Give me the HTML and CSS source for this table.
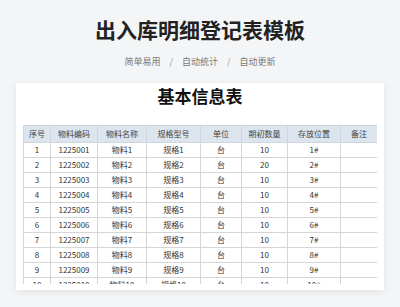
FILE: index.html
```html
<!DOCTYPE html>
<html lang="zh-CN">
<head>
<meta charset="utf-8">
<title>出入库明细登记表模板</title>
<link rel="stylesheet" href="styles.css">
</head>
<body>
<header class="hero">
  <h1 class="hero-title">出入库明细登记表模板</h1>
  <p class="hero-tags">
    <span>简单易用</span><span class="sep">/</span><span>自动统计</span><span class="sep">/</span><span>自动更新</span>
  </p>
</header>
<main class="card">
  <h2 class="card-title">基本信息表</h2>
  <div class="table-wrap">
    <table class="sheet">
      <colgroup>
        <col class="c1"><col class="c2"><col class="c3"><col class="c4"><col class="c5"><col class="c6"><col class="c7"><col class="c8">
      </colgroup>
      <thead>
        <tr><th>序号</th><th>物料编码</th><th>物料名称</th><th>规格型号</th><th>单位</th><th>期初数量</th><th>存放位置</th><th>备注</th></tr>
      </thead>
      <tbody>
        <tr><td>1</td><td>1225001</td><td>物料1</td><td>规格1</td><td>台</td><td>10</td><td>1#</td><td></td></tr>
        <tr><td>2</td><td>1225002</td><td>物料2</td><td>规格2</td><td>台</td><td>20</td><td>2#</td><td></td></tr>
        <tr><td>3</td><td>1225003</td><td>物料3</td><td>规格3</td><td>台</td><td>10</td><td>3#</td><td></td></tr>
        <tr><td>4</td><td>1225004</td><td>物料4</td><td>规格4</td><td>台</td><td>10</td><td>4#</td><td></td></tr>
        <tr><td>5</td><td>1225005</td><td>物料5</td><td>规格5</td><td>台</td><td>10</td><td>5#</td><td></td></tr>
        <tr><td>6</td><td>1225006</td><td>物料6</td><td>规格6</td><td>台</td><td>10</td><td>6#</td><td></td></tr>
        <tr><td>7</td><td>1225007</td><td>物料7</td><td>规格7</td><td>台</td><td>10</td><td>7#</td><td></td></tr>
        <tr><td>8</td><td>1225008</td><td>物料8</td><td>规格8</td><td>台</td><td>10</td><td>8#</td><td></td></tr>
        <tr><td>9</td><td>1225009</td><td>物料9</td><td>规格9</td><td>台</td><td>10</td><td>9#</td><td></td></tr>
        <tr><td>10</td><td>1225010</td><td>物料10</td><td>规格10</td><td>台</td><td>10</td><td>10#</td><td></td></tr>
      </tbody>
    </table>
  </div>
</main>
</body>
</html>
```
FILE: styles.css
```css
html, body {
  margin: 0;
  padding: 0;
}
body {
  width: 400px;
  height: 307px;
  overflow: hidden;
  background: #f4f5f7;
  font-family: "Noto Sans CJK SC", "Noto Sans", sans-serif;
  color: #222;
}
.hero {
  padding-top: 15px;
  text-align: center;
}
.hero-title {
  margin: 0;
  font-size: 21px;
  line-height: 28px;
  font-weight: 700;
  color: #222;
}
.hero-tags {
  margin: 12px 0 0;
  font-size: 9px;
  line-height: 14px;
  color: #777;
  display: flex;
  justify-content: center;
}
.hero-tags .sep {
  margin: 0 9px;
  color: #999;
}
.card {
  margin: 14px 16px 0;
  height: 207px;
  box-sizing: border-box;
  padding: 2px 7px 6px;
  background: #fff;
  box-shadow: 0 2px 8px rgba(0, 0, 0, 0.08);
  display: flex;
  flex-direction: column;
}
.card-title {
  margin: 0 0 18px;
  font-size: 17px;
  line-height: 22px;
  font-weight: 700;
  text-align: center;
  color: #111;
}
.table-wrap {
  flex: 1;
  overflow: hidden;
}
.sheet {
  width: 354px;
  border-collapse: collapse;
  table-layout: fixed;
  font-size: 8px;
  text-align: center;
}
.c1 { width: 27px; }
.c2 { width: 47px; }
.c3 { width: 49px; }
.c4 { width: 54px; }
.c5 { width: 41px; }
.c6 { width: 46px; }
.c7 { width: 53px; }
.c8 { width: 37px; }
.sheet th, .sheet td {
  border: 1px solid #d6d6d6;
  padding: 0;
  line-height: 12px;
  font-weight: 400;
}
.sheet thead tr {
  height: 17px;
}
.sheet th {
  background: #dce4ee;
  color: #444;
  border-color: #cfd6de;
}
.sheet tbody tr {
  height: 15px;
}
.sheet td {
  color: #333;
}
```
